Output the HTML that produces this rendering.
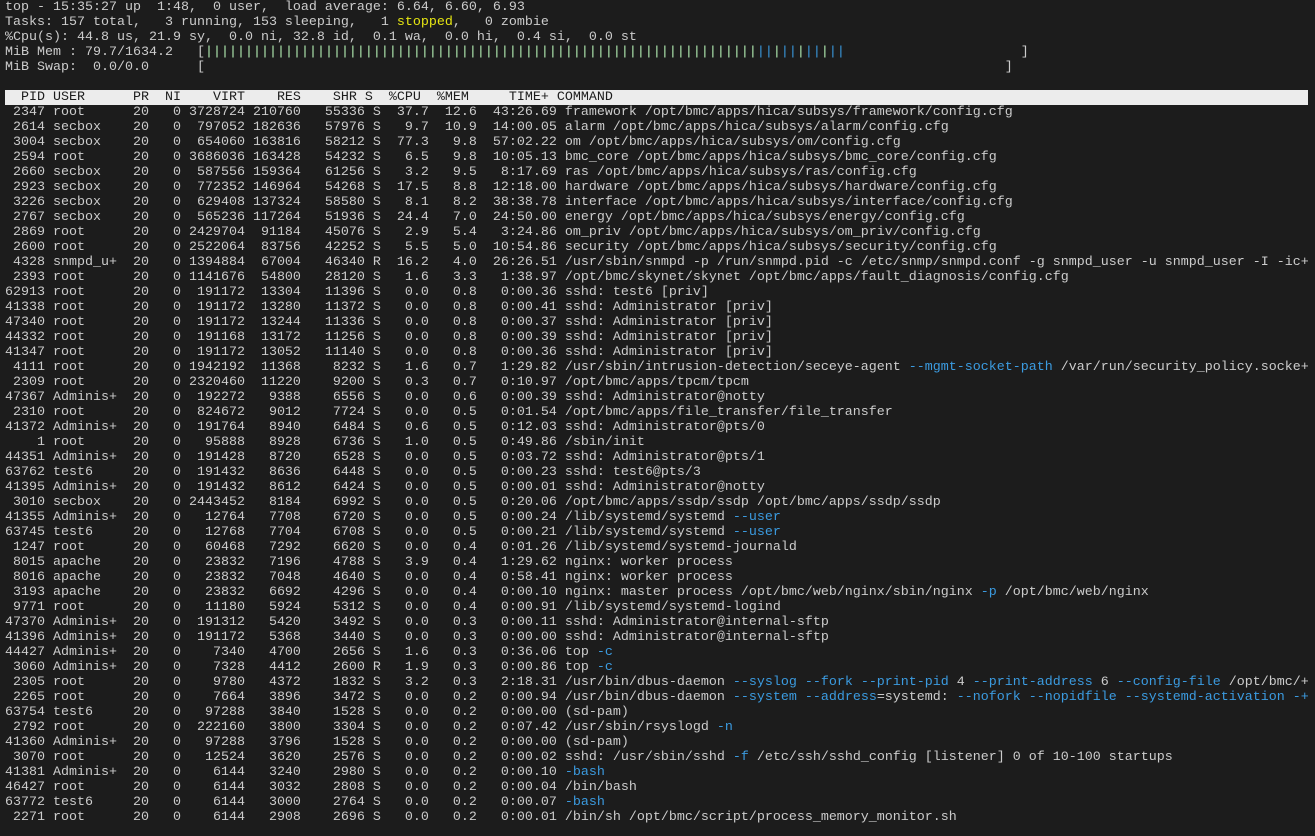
<!DOCTYPE html>
<html><head><meta charset="utf-8"><style>
html,body{margin:0;padding:0;background:#1c1c1c;width:1315px;height:836px;overflow:hidden}
pre{margin:0;padding:0 0 0 5px;font-family:"Liberation Mono","DejaVu Sans Mono",monospace;font-size:13.33px;line-height:15px;color:#cccccc;white-space:pre}
.y{color:#e5e512}.b{color:#3b9be0}.g{color:#b4f0b4}.h{display:inline-block;background:#ececec;color:#1c1c1c;width:1303px}
</style></head><body><pre>top - 15:35:27 up  1:48,  0 user,  load average: 6.64, 6.60, 6.93
Tasks: 157 total,   3 running, 153 sleeping,   1 <span class="y">stopped</span>,   0 zombie
%Cpu(s): 44.8 us, 21.9 sy,  0.0 ni, 32.8 id,  0.1 wa,  0.0 hi,  0.4 si,  0.0 st
MiB Mem : 79.7/1634.2   [<span class="g">|||||||||||||||||||||||||||||||||||||||||||||||||||||||||||||||||||||</span><span class="b">||</span><span class="g">|</span><span class="b">||</span><span class="g">|</span><span class="b">||</span><span class="g">|</span><span class="b">||</span>                      ]
MiB Swap:  0.0/0.0      [                                                                                                    ]

<span class="h">  PID USER      PR  NI    VIRT    RES    SHR S  %CPU  %MEM     TIME+ COMMAND</span>
 2347 root      20   0 3728724 210760   55336 S  37.7  12.6  43:26.69 framework /opt/bmc/apps/hica/subsys/framework/config.cfg
 2614 secbox    20   0  797052 182636   57976 S   9.7  10.9  14:00.05 alarm /opt/bmc/apps/hica/subsys/alarm/config.cfg
 3004 secbox    20   0  654060 163816   58212 S  77.3   9.8  57:02.22 om /opt/bmc/apps/hica/subsys/om/config.cfg
 2594 root      20   0 3686036 163428   54232 S   6.5   9.8  10:05.13 bmc_core /opt/bmc/apps/hica/subsys/bmc_core/config.cfg
 2660 secbox    20   0  587556 159364   61256 S   3.2   9.5   8:17.69 ras /opt/bmc/apps/hica/subsys/ras/config.cfg
 2923 secbox    20   0  772352 146964   54268 S  17.5   8.8  12:18.00 hardware /opt/bmc/apps/hica/subsys/hardware/config.cfg
 3226 secbox    20   0  629408 137324   58580 S   8.1   8.2  38:38.78 interface /opt/bmc/apps/hica/subsys/interface/config.cfg
 2767 secbox    20   0  565236 117264   51936 S  24.4   7.0  24:50.00 energy /opt/bmc/apps/hica/subsys/energy/config.cfg
 2869 root      20   0 2429704  91184   45076 S   2.9   5.4   3:24.86 om_priv /opt/bmc/apps/hica/subsys/om_priv/config.cfg
 2600 root      20   0 2522064  83756   42252 S   5.5   5.0  10:54.86 security /opt/bmc/apps/hica/subsys/security/config.cfg
 4328 snmpd_u+  20   0 1394884  67004   46340 R  16.2   4.0  26:26.51 /usr/sbin/snmpd -p /run/snmpd.pid -c /etc/snmp/snmpd.conf -g snmpd_user -u snmpd_user -I -ic+
 2393 root      20   0 1141676  54800   28120 S   1.6   3.3   1:38.97 /opt/bmc/skynet/skynet /opt/bmc/apps/fault_diagnosis/config.cfg
62913 root      20   0  191172  13304   11396 S   0.0   0.8   0:00.36 sshd: test6 [priv]
41338 root      20   0  191172  13280   11372 S   0.0   0.8   0:00.41 sshd: Administrator [priv]
47340 root      20   0  191172  13244   11336 S   0.0   0.8   0:00.37 sshd: Administrator [priv]
44332 root      20   0  191168  13172   11256 S   0.0   0.8   0:00.39 sshd: Administrator [priv]
41347 root      20   0  191172  13052   11140 S   0.0   0.8   0:00.36 sshd: Administrator [priv]
 4111 root      20   0 1942192  11368    8232 S   1.6   0.7   1:29.82 /usr/sbin/intrusion-detection/seceye-agent <span class="b">--mgmt-socket-path</span> /var/run/security_policy.socke+
 2309 root      20   0 2320460  11220    9200 S   0.3   0.7   0:10.97 /opt/bmc/apps/tpcm/tpcm
47367 Adminis+  20   0  192272   9388    6556 S   0.0   0.6   0:00.39 sshd: Administrator@notty
 2310 root      20   0  824672   9012    7724 S   0.0   0.5   0:01.54 /opt/bmc/apps/file_transfer/file_transfer
41372 Adminis+  20   0  191764   8940    6484 S   0.6   0.5   0:12.03 sshd: Administrator@pts/0
    1 root      20   0   95888   8928    6736 S   1.0   0.5   0:49.86 /sbin/init
44351 Adminis+  20   0  191428   8720    6528 S   0.0   0.5   0:03.72 sshd: Administrator@pts/1
63762 test6     20   0  191432   8636    6448 S   0.0   0.5   0:00.23 sshd: test6@pts/3
41395 Adminis+  20   0  191432   8612    6424 S   0.0   0.5   0:00.01 sshd: Administrator@notty
 3010 secbox    20   0 2443452   8184    6992 S   0.0   0.5   0:20.06 /opt/bmc/apps/ssdp/ssdp /opt/bmc/apps/ssdp/ssdp
41355 Adminis+  20   0   12764   7708    6720 S   0.0   0.5   0:00.24 /lib/systemd/systemd <span class="b">--user</span>
63745 test6     20   0   12768   7704    6708 S   0.0   0.5   0:00.21 /lib/systemd/systemd <span class="b">--user</span>
 1247 root      20   0   60468   7292    6620 S   0.0   0.4   0:01.26 /lib/systemd/systemd-journald
 8015 apache    20   0   23832   7196    4788 S   3.9   0.4   1:29.62 nginx: worker process
 8016 apache    20   0   23832   7048    4640 S   0.0   0.4   0:58.41 nginx: worker process
 3193 apache    20   0   23832   6692    4296 S   0.0   0.4   0:00.10 nginx: master process /opt/bmc/web/nginx/sbin/nginx <span class="b">-p</span> /opt/bmc/web/nginx
 9771 root      20   0   11180   5924    5312 S   0.0   0.4   0:00.91 /lib/systemd/systemd-logind
47370 Adminis+  20   0  191312   5420    3492 S   0.0   0.3   0:00.11 sshd: Administrator@internal-sftp
41396 Adminis+  20   0  191172   5368    3440 S   0.0   0.3   0:00.00 sshd: Administrator@internal-sftp
44427 Adminis+  20   0    7340   4700    2656 S   1.6   0.3   0:36.06 top <span class="b">-c</span>
 3060 Adminis+  20   0    7328   4412    2600 R   1.9   0.3   0:00.86 top <span class="b">-c</span>
 2305 root      20   0    9780   4372    1832 S   3.2   0.3   2:18.31 /usr/bin/dbus-daemon <span class="b">--syslog --fork --print-pid</span> 4 <span class="b">--print-address</span> 6 <span class="b">--config-file</span> /opt/bmc/+
 2265 root      20   0    7664   3896    3472 S   0.0   0.2   0:00.94 /usr/bin/dbus-daemon <span class="b">--system --address</span>=systemd: <span class="b">--nofork --nopidfile --systemd-activation -+</span>
63754 test6     20   0   97288   3840    1528 S   0.0   0.2   0:00.00 (sd-pam)
 2792 root      20   0  222160   3800    3304 S   0.0   0.2   0:07.42 /usr/sbin/rsyslogd <span class="b">-n</span>
41360 Adminis+  20   0   97288   3796    1528 S   0.0   0.2   0:00.00 (sd-pam)
 3070 root      20   0   12524   3620    2576 S   0.0   0.2   0:00.02 sshd: /usr/sbin/sshd <span class="b">-f</span> /etc/ssh/sshd_config [listener] 0 of 10-100 startups
41381 Adminis+  20   0    6144   3240    2980 S   0.0   0.2   0:00.10 <span class="b">-bash</span>
46427 root      20   0    6144   3032    2808 S   0.0   0.2   0:00.04 /bin/bash
63772 test6     20   0    6144   3000    2764 S   0.0   0.2   0:00.07 <span class="b">-bash</span>
 2271 root      20   0    6144   2908    2696 S   0.0   0.2   0:00.01 /bin/sh /opt/bmc/script/process_memory_monitor.sh
</pre></body></html>
